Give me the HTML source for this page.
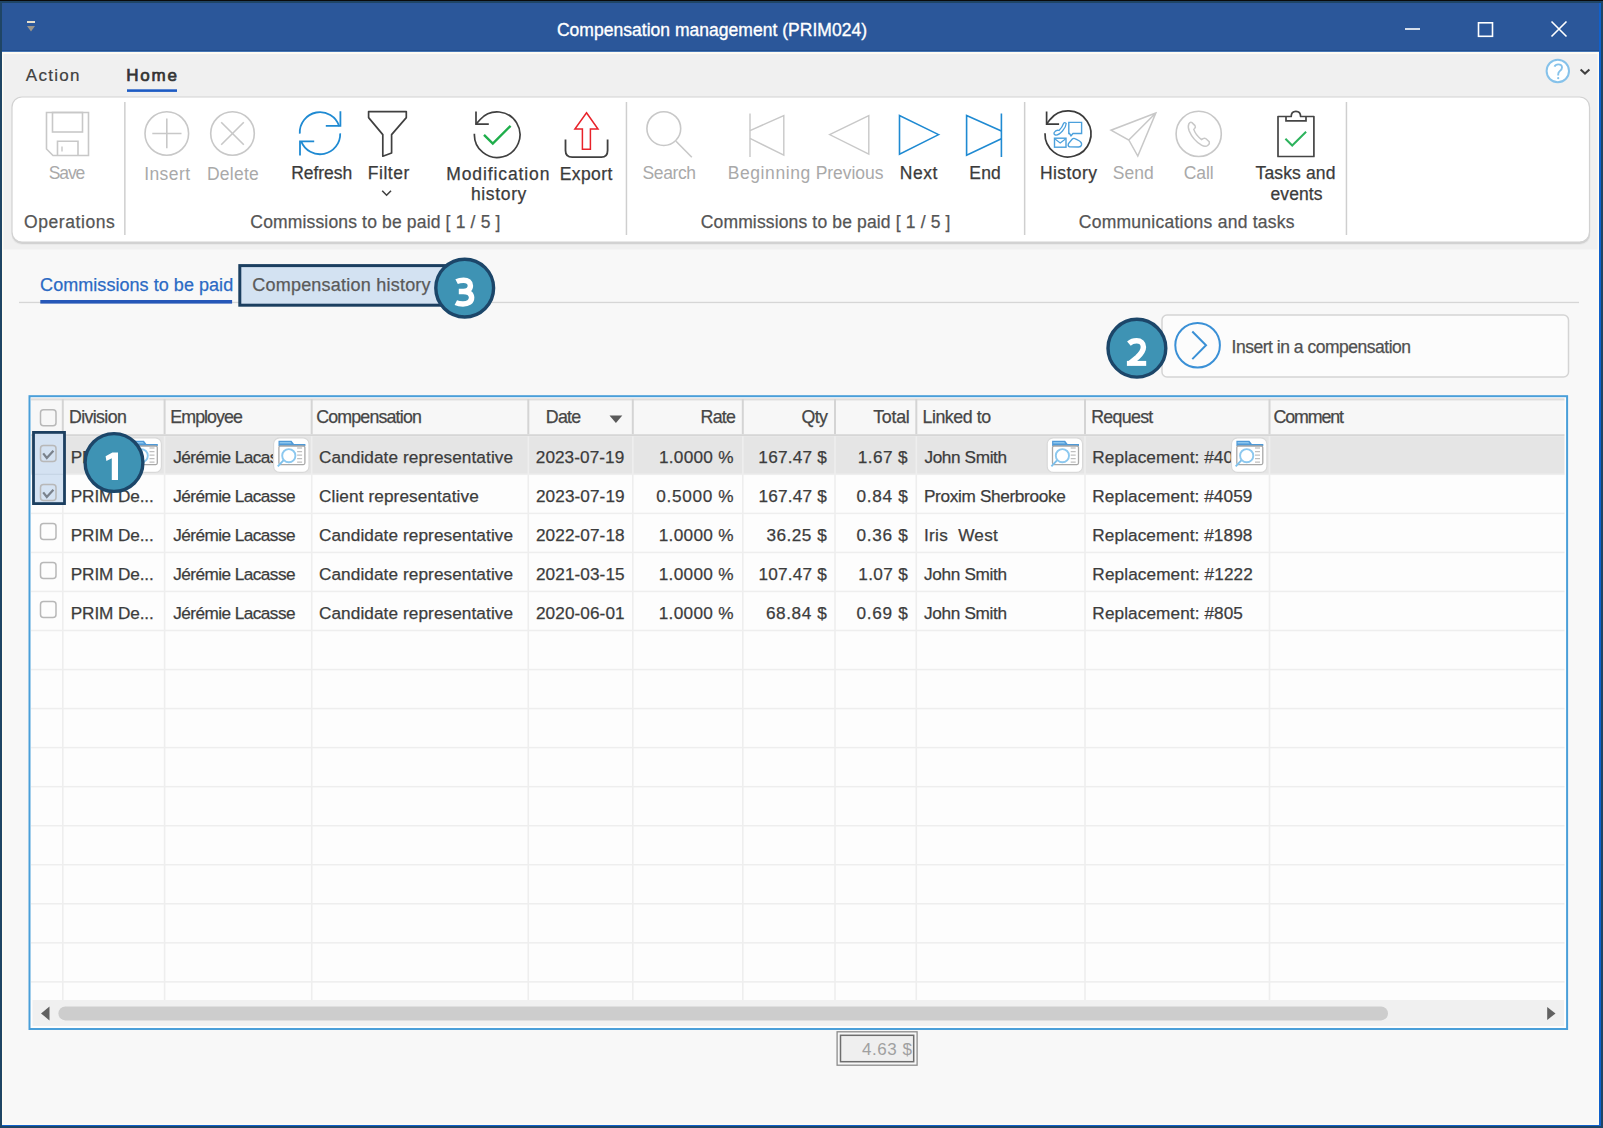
<!DOCTYPE html>
<html><head><meta charset="utf-8"><title>Compensation management</title>
<style>
html,body{margin:0;padding:0;background:#f8f8f8;}
body{width:1603px;height:1128px;overflow:hidden;}
svg{display:block;}
text{font-family:"Liberation Sans",sans-serif;}
</style></head><body>
<svg width="1603" height="1128" viewBox="0 0 1603 1128">
<rect x="0" y="0" width="1603" height="1128" fill="#1f4565"/>
<rect x="0" y="0" width="1603" height="1" fill="#0b0b0b"/>
<rect x="2" y="3" width="1599" height="1123" fill="#1060cc"/>
<rect x="2" y="3" width="1597" height="48" fill="#2b579a"/>
<rect x="2" y="50" width="1597" height="1.6" fill="#214e8e"/>
<rect x="2" y="51.8" width="1597" height="1073.2" fill="#fffcf3"/>
<rect x="3.5" y="54" width="1594" height="1069.5" fill="#f8f8f8"/>
<rect x="3.5" y="54" width="1594" height="195.5" fill="#f0f0f0"/>
<rect x="27" y="21" width="8" height="2" fill="#e8e0cc"/>
<path d="M27 26 L35 26 L31 31.5 Z" fill="#9a958a"/>
<text x="556.95" y="35.70" font-size="17.5" fill="#ffffff" font-weight="400" textLength="310.10" lengthAdjust="spacing" stroke="#ffffff" stroke-width="0.35">Compensation management (PRIM024)</text>
<rect x="1405" y="28.2" width="15" height="1.6" fill="#ffffff"/>
<rect x="1478.5" y="22.8" width="14" height="13.5" fill="none" stroke="#ffffff" stroke-width="1.6"/>
<path d="M1551.5 21.5 L1566.5 36.5 M1566.5 21.5 L1551.5 36.5" stroke="#ffffff" stroke-width="1.6"/>
<text x="25.78" y="81.00" font-size="17" fill="#404040" font-weight="400" textLength="53.64" lengthAdjust="spacing" stroke="#404040" stroke-width="0.2">Action</text>
<text x="126.28" y="81.00" font-size="17" fill="#333333" font-weight="400" textLength="50.74" lengthAdjust="spacing" stroke="#333333" stroke-width="0.7">Home</text>
<rect x="127" y="89.3" width="50" height="2.6" fill="#1d5bc4"/>
<circle cx="1557.8" cy="71" r="11.2" fill="#ffffff" stroke="#86c2ea" stroke-width="2"/>
<path d="M1554.5 66.6 Q1555.5 64.4 1558.2 64.4 Q1562 64.4 1562 67.6 Q1562 69.8 1559.6 71.2 Q1558.2 72.2 1558.2 74.4 L1558.2 75.4" fill="none" stroke="#86c2ea" stroke-width="1.9"/>
<circle cx="1558.2" cy="78.2" r="1.1" fill="#86c2ea"/>
<path d="M1580.6 69.6 L1585 73.6 L1589.4 69.6" fill="none" stroke="#404040" stroke-width="2"/>
<rect x="11.5" y="98" width="1579" height="147" rx="10" fill="#e9e9e9"/>
<rect x="12" y="98.5" width="1578" height="145.5" rx="10" fill="#d2d2d2"/>
<rect x="12" y="97" width="1577.5" height="145" rx="10" fill="#ffffff" stroke="#d2d2d2" stroke-width="1.2"/>
<rect x="124.1" y="102" width="1.5" height="133" fill="#cfcfcf"/>
<rect x="625.7" y="102" width="1.5" height="133" fill="#cfcfcf"/>
<rect x="1023.9" y="102" width="1.5" height="133" fill="#cfcfcf"/>
<rect x="1345.7" y="102" width="1.5" height="133" fill="#cfcfcf"/>
<path d="M46.5 112.5 H88.5 V155.5 H53 L46.5 149 Z" fill="none" stroke="#c8c8c8" stroke-width="1.6"/>
<rect x="52.5" y="112.5" width="30" height="19.5" fill="none" stroke="#c8c8c8" stroke-width="1.6"/>
<path d="M57.5 155.5 V141.2 H78 V155.5" fill="none" stroke="#c8c8c8" stroke-width="1.6"/>
<path d="M62 146.5 V151.5" stroke="#c8c8c8" stroke-width="1.4"/>
<text x="48.75" y="179.40" font-size="17.5" fill="#a9a9a9" font-weight="400" textLength="36.60" lengthAdjust="spacing" >Save</text>
<circle cx="166.8" cy="133.5" r="21.8" fill="none" stroke="#c8c8c8" stroke-width="1.6"/>
<path d="M152.3 133.5 H181.5 M166.8 118.6 V148.3" stroke="#c8c8c8" stroke-width="1.6"/>
<text x="144.15" y="179.60" font-size="17.5" fill="#a9a9a9" font-weight="400" textLength="45.90" lengthAdjust="spacing" >Insert</text>
<circle cx="232.5" cy="133.5" r="21.8" fill="none" stroke="#c8c8c8" stroke-width="1.6"/>
<path d="M221.2 122.2 L243.8 144.8 M243.8 122.2 L221.2 144.8" stroke="#c8c8c8" stroke-width="1.6"/>
<text x="206.95" y="179.60" font-size="17.5" fill="#a9a9a9" font-weight="400" textLength="51.90" lengthAdjust="spacing" >Delete</text>
<path d="M299.8 133.6 A20.2 20.2 0 0 1 339.2 126.2" fill="none" stroke="#1f8ad2" stroke-width="1.8"/>
<path d="M340.4 111.2 V125.8 H325.8" fill="none" stroke="#1f8ad2" stroke-width="1.8"/>
<path d="M340.2 133.4 A20.2 20.2 0 0 1 301.2 141.4" fill="none" stroke="#1f8ad2" stroke-width="1.8"/>
<path d="M300 155.6 V141.4 H314.2" fill="none" stroke="#1f8ad2" stroke-width="1.8"/>
<text x="291.15" y="179.40" font-size="17.5" fill="#3b3b3b" font-weight="400" textLength="61.00" lengthAdjust="spacing"  stroke="#3b3b3b" stroke-width="0.25">Refresh</text>
<path d="M368.6 111.6 H406.3 V117.6 L391.6 134.6 V153 L382.8 156.2 V134.6 L368.6 117.6 Z" fill="none" stroke="#404040" stroke-width="1.7" stroke-linejoin="round"/>
<path d="M382.2 190.8 L386.6 195.2 L391 190.8" fill="none" stroke="#404040" stroke-width="1.6"/>
<text x="367.85" y="179.40" font-size="17.5" fill="#3b3b3b" font-weight="400" textLength="41.40" lengthAdjust="spacing"  stroke="#3b3b3b" stroke-width="0.25">Filter</text>
<path d="M474.4 133.8 A22.8 22.8 0 1 0 480.2 119.5 L476 124.1" fill="none" stroke="#404040" stroke-width="1.7"/>
<path d="M476 111.4 V124.1 H488.8" fill="none" stroke="#404040" stroke-width="1.7"/>
<path d="M484 134.8 L492.8 143.6 L510.6 125.8" fill="none" stroke="#1fae4b" stroke-width="2.4"/>
<text x="446.25" y="179.60" font-size="17.5" fill="#3b3b3b" font-weight="400" textLength="103.20" lengthAdjust="spacing"  stroke="#3b3b3b" stroke-width="0.25">Modification</text>
<text x="470.95" y="199.80" font-size="17.5" fill="#3b3b3b" font-weight="400" textLength="55.40" lengthAdjust="spacing"  stroke="#3b3b3b" stroke-width="0.25">history</text>
<path d="M586.5 112.8 L598 129 H590.4 V149.2 H582.4 V129 H574.9 Z" fill="none" stroke="#e8222a" stroke-width="1.5" stroke-linejoin="miter"/>
<path d="M565.5 139.4 V150.5 Q565.5 157.2 572.2 157.2 H601.4 Q607.6 157.2 607.6 150.5 V139.4" fill="none" stroke="#404040" stroke-width="1.8"/>
<text x="559.65" y="179.60" font-size="17.5" fill="#3b3b3b" font-weight="400" textLength="52.60" lengthAdjust="spacing"  stroke="#3b3b3b" stroke-width="0.25">Export</text>
<circle cx="663.8" cy="128.6" r="16.9" fill="none" stroke="#c8c8c8" stroke-width="1.6"/>
<path d="M676 141.2 L691.8 157.2" stroke="#c8c8c8" stroke-width="1.6"/>
<text x="642.55" y="179.40" font-size="17.5" fill="#a9a9a9" font-weight="400" textLength="53.50" lengthAdjust="spacing" >Search</text>
<path d="M750 113.5 V157" stroke="#c8c8c8" stroke-width="1.4"/>
<path d="M750 130.6 L783.8 115.6 V155.2 L750 138.4" fill="none" stroke="#c8c8c8" stroke-width="1.4"/>
<text x="727.65" y="179.40" font-size="17.5" fill="#a9a9a9" font-weight="400" textLength="82.70" lengthAdjust="spacing" >Beginning</text>
<path d="M829.6 134.6 L868.8 115.6 V154.2 Z" fill="none" stroke="#c8c8c8" stroke-width="1.4" stroke-linejoin="miter"/>
<text x="815.65" y="179.40" font-size="17.5" fill="#a9a9a9" font-weight="400" textLength="67.80" lengthAdjust="spacing" >Previous</text>
<path d="M938.6 134.6 L899.5 115.6 V154.2 Z" fill="none" stroke="#1f8ad2" stroke-width="1.6"/>
<text x="899.75" y="179.40" font-size="17.5" fill="#3b3b3b" font-weight="400" textLength="37.50" lengthAdjust="spacing"  stroke="#3b3b3b" stroke-width="0.25">Next</text>
<path d="M1001.4 131 L966.6 115.6 V155.2 L1001.4 138.7" fill="none" stroke="#1f8ad2" stroke-width="1.6"/>
<path d="M1001.4 113.5 V157" stroke="#1f8ad2" stroke-width="1.6"/>
<text x="969.35" y="179.40" font-size="17.5" fill="#3b3b3b" font-weight="400" textLength="31.50" lengthAdjust="spacing"  stroke="#3b3b3b" stroke-width="0.25">End</text>
<path d="M1045 133.2 A23 23 0 1 0 1050 119.6 L1046.6 124.1" fill="none" stroke="#3c3c3c" stroke-width="1.7"/>
<path d="M1046.6 111.4 V124.1 H1059.1" fill="none" stroke="#3c3c3c" stroke-width="1.7"/>
<path d="M1054.2 132.5 Q1056 129.5 1059 130.5 Q1062.5 127 1063.5 123.5 Q1064.5 121.8 1066.2 123.5 Q1066 127 1062.5 131 Q1058.5 135.5 1055.5 135 Q1053.5 134.5 1054.2 132.5 Z" fill="none" stroke="#4ba0dc" stroke-width="1.3"/>
<path d="M1068.8 122.4 H1081.6 V133.5 H1073 L1071 135.8 L1069.5 133.5 H1068.8 Z" fill="none" stroke="#4ba0dc" stroke-width="1.4"/>
<rect x="1054.5" y="138.2" width="11.5" height="9" fill="none" stroke="#4ba0dc" stroke-width="1.4"/>
<path d="M1055 139 L1060.2 143 L1065.5 139" fill="none" stroke="#4ba0dc" stroke-width="1.2"/>
<path d="M1069.5 146.8 Q1067.5 146.5 1068.5 143.5 L1072.5 138.8 Q1074 137.8 1076 139.2 L1079.5 141 Q1082 142.5 1081.5 145 Q1081 147 1078.5 147 Z" fill="none" stroke="#4ba0dc" stroke-width="1.4"/>
<text x="1039.95" y="179.40" font-size="17.5" fill="#3b3b3b" font-weight="400" textLength="57.00" lengthAdjust="spacing"  stroke="#3b3b3b" stroke-width="0.25">History</text>
<path d="M1155.8 113 L1111 130.2 L1128.8 140 L1137.8 156 Z M1128.8 140 L1155.8 113" fill="none" stroke="#c8c8c8" stroke-width="1.5" stroke-linejoin="miter"/>
<text x="1112.75" y="179.40" font-size="17.5" fill="#a9a9a9" font-weight="400" textLength="41.10" lengthAdjust="spacing" >Send</text>
<circle cx="1198.7" cy="133.9" r="22.6" fill="none" stroke="#c8c8c8" stroke-width="1.6"/>
<path d="M1188.8 124 Q1190.2 121.6 1192 122.6 L1195 125.6 Q1196 127 1194.6 128.6 L1193.8 129.4 Q1195.5 135 1201.6 139.6 L1203 138.6 Q1204.6 137.6 1206 138.8 L1209.2 141.6 Q1210 143.6 1208 145.2 Q1205.5 147.4 1201.5 145.2 Q1193 140 1189.2 131 Q1187.6 126.6 1188.8 124 Z" fill="none" stroke="#c8c8c8" stroke-width="1.5"/>
<text x="1183.65" y="179.40" font-size="17.5" fill="#a9a9a9" font-weight="400" textLength="30.10" lengthAdjust="spacing" >Call</text>
<path d="M1278 116.5 H1291.2 Q1291.2 111.3 1295.9 111.3 Q1300.6 111.3 1300.6 116.5 H1313.9 V156.5 H1278 Z" fill="none" stroke="#454545" stroke-width="1.7" stroke-linejoin="round"/>
<path d="M1286 116.5 V120.9 H1306 V116.5" fill="none" stroke="#454545" stroke-width="1.7"/>
<path d="M1285.4 138.7 L1292.2 145.5 L1306.1 131.8" fill="none" stroke="#2db35d" stroke-width="2"/>
<text x="1255.55" y="179.40" font-size="17.5" fill="#3b3b3b" font-weight="400" textLength="79.90" lengthAdjust="spacing"  stroke="#3b3b3b" stroke-width="0.25">Tasks and</text>
<text x="1270.55" y="199.60" font-size="17.5" fill="#3b3b3b" font-weight="400" textLength="52.00" lengthAdjust="spacing"  stroke="#3b3b3b" stroke-width="0.25">events</text>
<text x="23.95" y="227.50" font-size="17.5" fill="#555555" font-weight="400" textLength="90.80" lengthAdjust="spacing"  stroke="#555555" stroke-width="0.25">Operations</text>
<text x="250.35" y="227.60" font-size="17.5" fill="#555555" font-weight="400" textLength="250.10" lengthAdjust="spacing"  stroke="#555555" stroke-width="0.25">Commissions to be paid [ 1 / 5 ]</text>
<text x="700.75" y="227.50" font-size="17.5" fill="#555555" font-weight="400" textLength="249.70" lengthAdjust="spacing"  stroke="#555555" stroke-width="0.25">Commissions to be paid [ 1 / 5 ]</text>
<text x="1078.85" y="227.50" font-size="17.5" fill="#555555" font-weight="400" textLength="215.70" lengthAdjust="spacing"  stroke="#555555" stroke-width="0.25">Communications and tasks</text>
<rect x="19" y="301.8" width="1560" height="1.3" fill="#d6d6d6"/>
<text x="40.12" y="290.50" font-size="18" fill="#2b6ac4" font-weight="400" textLength="193.06" lengthAdjust="spacing"  stroke="#2b6ac4" stroke-width="0.25">Commissions to be paid</text>
<rect x="40.3" y="300" width="191.8" height="3.6" fill="#2657b8"/>
<rect x="239.8" y="265.6" width="205.5" height="39.6" fill="#d3e2f2" stroke="#1c3f60" stroke-width="3"/>
<text x="252.22" y="290.50" font-size="18" fill="#5a5a5a" font-weight="400" textLength="178.36" lengthAdjust="spacing"  stroke="#5a5a5a" stroke-width="0.25">Compensation history</text>
<rect x="1162" y="315" width="406.5" height="62" rx="5" fill="#fcfcfc" stroke="#d4d4d4" stroke-width="1.5"/>
<circle cx="1197.6" cy="345.3" r="22.3" fill="none" stroke="#3a90d6" stroke-width="2"/>
<path d="M1192.3 331.5 L1206 345.3 L1192.3 359.1" fill="none" stroke="#3a90d6" stroke-width="2"/>
<text x="1231.55" y="353.40" font-size="17.5" fill="#505050" font-weight="400" textLength="179.50" lengthAdjust="spacing"  stroke="#505050" stroke-width="0.25">Insert in a compensation</text>
<rect x="29.5" y="396.2" width="1537.6" height="632.8" fill="#fdfdfd" stroke="#4a9fd9" stroke-width="2"/>
<rect x="31" y="399" width="1533.5" height="36" fill="#f7f7f7"/>
<rect x="31" y="398" width="1533.5" height="1" fill="#ece6e2"/>
<rect x="31" y="399" width="1533.5" height="1.4" fill="#dddddd"/>
<rect x="31" y="434.2" width="1533.5" height="2" fill="#d6d6d6"/>
<rect x="61.8" y="399" width="2" height="35.2" fill="#d4d4d4"/>
<rect x="163.6" y="399" width="2" height="35.2" fill="#d4d4d4"/>
<rect x="310.7" y="399" width="2" height="35.2" fill="#d4d4d4"/>
<rect x="527.3" y="399" width="2" height="35.2" fill="#d4d4d4"/>
<rect x="631.8" y="399" width="2" height="35.2" fill="#d4d4d4"/>
<rect x="741.8" y="399" width="2" height="35.2" fill="#d4d4d4"/>
<rect x="834.0" y="399" width="2" height="35.2" fill="#d4d4d4"/>
<rect x="915.3" y="399" width="2" height="35.2" fill="#d4d4d4"/>
<rect x="1084.0" y="399" width="2" height="35.2" fill="#d4d4d4"/>
<rect x="1268.5" y="399" width="2" height="35.2" fill="#d4d4d4"/>
<rect x="31" y="436.2" width="1533.5" height="38" fill="#e5e5e5"/>
<rect x="31" y="473.59" width="1533.5" height="1.5" fill="#eeeeee"/>
<rect x="31" y="512.63" width="1533.5" height="1.5" fill="#eeeeee"/>
<rect x="31" y="551.67" width="1533.5" height="1.5" fill="#eeeeee"/>
<rect x="31" y="590.71" width="1533.5" height="1.5" fill="#eeeeee"/>
<rect x="31" y="629.75" width="1533.5" height="1.5" fill="#eeeeee"/>
<rect x="31" y="668.79" width="1533.5" height="1.5" fill="#eeeeee"/>
<rect x="31" y="707.83" width="1533.5" height="1.5" fill="#eeeeee"/>
<rect x="31" y="746.87" width="1533.5" height="1.5" fill="#eeeeee"/>
<rect x="31" y="785.91" width="1533.5" height="1.5" fill="#eeeeee"/>
<rect x="31" y="824.95" width="1533.5" height="1.5" fill="#eeeeee"/>
<rect x="31" y="863.99" width="1533.5" height="1.5" fill="#eeeeee"/>
<rect x="31" y="903.03" width="1533.5" height="1.5" fill="#eeeeee"/>
<rect x="31" y="942.07" width="1533.5" height="1.5" fill="#eeeeee"/>
<rect x="31" y="981.11" width="1533.5" height="1.5" fill="#eeeeee"/>
<rect x="62.0" y="436.2" width="1.6" height="563.8" fill="#eeeeee"/>
<rect x="163.8" y="436.2" width="1.6" height="563.8" fill="#eeeeee"/>
<rect x="310.9" y="436.2" width="1.6" height="563.8" fill="#eeeeee"/>
<rect x="527.5" y="436.2" width="1.6" height="563.8" fill="#eeeeee"/>
<rect x="632.0" y="436.2" width="1.6" height="563.8" fill="#eeeeee"/>
<rect x="742.0" y="436.2" width="1.6" height="563.8" fill="#eeeeee"/>
<rect x="834.2" y="436.2" width="1.6" height="563.8" fill="#eeeeee"/>
<rect x="915.5" y="436.2" width="1.6" height="563.8" fill="#eeeeee"/>
<rect x="1084.2" y="436.2" width="1.6" height="563.8" fill="#eeeeee"/>
<rect x="1268.7" y="436.2" width="1.6" height="563.8" fill="#eeeeee"/>
<rect x="32.5" y="1000" width="1531.5" height="26" fill="#f0f0f0"/>
<path d="M49.5 1006.4 V1020.4 L41 1013.4 Z" fill="#616161"/>
<path d="M1547.2 1007 V1020 L1555.5 1013.5 Z" fill="#616161"/>
<rect x="58.4" y="1006.4" width="1329.6" height="14" rx="7" fill="#cdcdcd"/>
<text x="68.93" y="423.20" font-size="17.8" fill="#464646" font-weight="400" textLength="57.94" lengthAdjust="spacing"  stroke="#464646" stroke-width="0.25">Division</text>
<text x="170.33" y="423.30" font-size="17.8" fill="#464646" font-weight="400" textLength="72.54" lengthAdjust="spacing"  stroke="#464646" stroke-width="0.25">Employee</text>
<text x="316.13" y="423.30" font-size="17.8" fill="#464646" font-weight="400" textLength="105.74" lengthAdjust="spacing"  stroke="#464646" stroke-width="0.25">Compensation</text>
<text x="545.83" y="423.30" font-size="17.8" fill="#464646" font-weight="400" textLength="35.34" lengthAdjust="spacing"  stroke="#464646" stroke-width="0.25">Date</text>
<path d="M609.5 415.5 H622.3 L615.9 423.1 Z" fill="#5a5a5a"/>
<text x="700.53" y="423.30" font-size="17.8" fill="#464646" font-weight="400" textLength="35.34" lengthAdjust="spacing"  stroke="#464646" stroke-width="0.25">Rate</text>
<text x="801.53" y="423.30" font-size="17.8" fill="#464646" font-weight="400" textLength="26.44" lengthAdjust="spacing"  stroke="#464646" stroke-width="0.25">Qty</text>
<text x="873.13" y="423.30" font-size="17.8" fill="#464646" font-weight="400" textLength="36.64" lengthAdjust="spacing"  stroke="#464646" stroke-width="0.25">Total</text>
<text x="922.43" y="423.30" font-size="17.8" fill="#464646" font-weight="400" textLength="68.64" lengthAdjust="spacing"  stroke="#464646" stroke-width="0.25">Linked to</text>
<text x="1091.23" y="423.30" font-size="17.8" fill="#464646" font-weight="400" textLength="62.04" lengthAdjust="spacing"  stroke="#464646" stroke-width="0.25">Request</text>
<text x="1273.53" y="423.30" font-size="17.8" fill="#464646" font-weight="400" textLength="70.54" lengthAdjust="spacing"  stroke="#464646" stroke-width="0.25">Comment</text>
<rect x="40.5" y="409.8" width="15.5" height="16" rx="3" fill="none" stroke="#b8b8b8" stroke-width="1.5"/>
<text x="70.77" y="462.60" font-size="17.2" fill="#3c3c3c" font-weight="400" textLength="82.96" lengthAdjust="spacing" xml:space="preserve" stroke="#3c3c3c" stroke-width="0.25">PRIM De...</text>
<text x="173.17" y="462.60" font-size="17.2" fill="#3c3c3c" font-weight="400" textLength="122.36" lengthAdjust="spacing" xml:space="preserve" stroke="#3c3c3c" stroke-width="0.25">Jérémie Lacasse</text>
<text x="318.97" y="462.60" font-size="17.2" fill="#3c3c3c" font-weight="400" textLength="194.06" lengthAdjust="spacing" xml:space="preserve" stroke="#3c3c3c" stroke-width="0.25">Candidate representative</text>
<text x="535.77" y="462.60" font-size="17.2" fill="#3c3c3c" font-weight="400" textLength="88.46" lengthAdjust="spacing" xml:space="preserve" stroke="#3c3c3c" stroke-width="0.25">2023-07-19</text>
<text x="658.97" y="462.60" font-size="17.2" fill="#3c3c3c" font-weight="400" textLength="74.56" lengthAdjust="spacing" xml:space="preserve" stroke="#3c3c3c" stroke-width="0.25">1.0000 %</text>
<text x="758.37" y="462.60" font-size="17.2" fill="#3c3c3c" font-weight="400" textLength="68.36" lengthAdjust="spacing" xml:space="preserve" stroke="#3c3c3c" stroke-width="0.25">167.47 $</text>
<text x="857.87" y="462.60" font-size="17.2" fill="#3c3c3c" font-weight="400" textLength="49.76" lengthAdjust="spacing" xml:space="preserve" stroke="#3c3c3c" stroke-width="0.25">1.67 $</text>
<text x="924.47" y="462.60" font-size="17.2" fill="#3c3c3c" font-weight="400" textLength="82.56" lengthAdjust="spacing" xml:space="preserve" stroke="#3c3c3c" stroke-width="0.25">John Smith</text>
<text x="1092.37" y="462.60" font-size="17.2" fill="#3c3c3c" font-weight="400" textLength="159.96" lengthAdjust="spacing" xml:space="preserve" stroke="#3c3c3c" stroke-width="0.25">Replacement: #4059</text>
<rect x="40.5" y="445.4" width="15.5" height="16" rx="3" fill="none" stroke="#b8b8b8" stroke-width="1.5"/>
<path d="M43.2 453.4 L46.8 458.0 L53.4 450.8" fill="none" stroke="#7a828c" stroke-width="2.2"/>
<text x="70.77" y="501.60" font-size="17.2" fill="#3c3c3c" font-weight="400" textLength="82.96" lengthAdjust="spacing" xml:space="preserve" stroke="#3c3c3c" stroke-width="0.25">PRIM De...</text>
<text x="173.17" y="501.60" font-size="17.2" fill="#3c3c3c" font-weight="400" textLength="122.36" lengthAdjust="spacing" xml:space="preserve" stroke="#3c3c3c" stroke-width="0.25">Jérémie Lacasse</text>
<text x="318.97" y="501.60" font-size="17.2" fill="#3c3c3c" font-weight="400" textLength="159.76" lengthAdjust="spacing" xml:space="preserve" stroke="#3c3c3c" stroke-width="0.25">Client representative</text>
<text x="535.97" y="501.60" font-size="17.2" fill="#3c3c3c" font-weight="400" textLength="88.66" lengthAdjust="spacing" xml:space="preserve" stroke="#3c3c3c" stroke-width="0.25">2023-07-19</text>
<text x="656.27" y="501.60" font-size="17.2" fill="#3c3c3c" font-weight="400" textLength="77.36" lengthAdjust="spacing" xml:space="preserve" stroke="#3c3c3c" stroke-width="0.25">0.5000 %</text>
<text x="758.57" y="501.60" font-size="17.2" fill="#3c3c3c" font-weight="400" textLength="68.16" lengthAdjust="spacing" xml:space="preserve" stroke="#3c3c3c" stroke-width="0.25">167.47 $</text>
<text x="856.57" y="501.60" font-size="17.2" fill="#3c3c3c" font-weight="400" textLength="51.26" lengthAdjust="spacing" xml:space="preserve" stroke="#3c3c3c" stroke-width="0.25">0.84 $</text>
<text x="923.97" y="501.60" font-size="17.2" fill="#3c3c3c" font-weight="400" textLength="141.76" lengthAdjust="spacing" xml:space="preserve" stroke="#3c3c3c" stroke-width="0.25">Proxim Sherbrooke</text>
<text x="1092.37" y="501.60" font-size="17.2" fill="#3c3c3c" font-weight="400" textLength="159.96" lengthAdjust="spacing" xml:space="preserve" stroke="#3c3c3c" stroke-width="0.25">Replacement: #4059</text>
<rect x="40.5" y="484.4" width="15.5" height="16" rx="3" fill="none" stroke="#b8b8b8" stroke-width="1.5"/>
<path d="M43.2 492.4 L46.8 497.0 L53.4 489.8" fill="none" stroke="#7a828c" stroke-width="2.2"/>
<text x="70.77" y="540.60" font-size="17.2" fill="#3c3c3c" font-weight="400" textLength="82.96" lengthAdjust="spacing" xml:space="preserve" stroke="#3c3c3c" stroke-width="0.25">PRIM De...</text>
<text x="173.17" y="540.60" font-size="17.2" fill="#3c3c3c" font-weight="400" textLength="122.36" lengthAdjust="spacing" xml:space="preserve" stroke="#3c3c3c" stroke-width="0.25">Jérémie Lacasse</text>
<text x="318.97" y="540.60" font-size="17.2" fill="#3c3c3c" font-weight="400" textLength="194.06" lengthAdjust="spacing" xml:space="preserve" stroke="#3c3c3c" stroke-width="0.25">Candidate representative</text>
<text x="535.97" y="540.60" font-size="17.2" fill="#3c3c3c" font-weight="400" textLength="88.66" lengthAdjust="spacing" xml:space="preserve" stroke="#3c3c3c" stroke-width="0.25">2022-07-18</text>
<text x="658.67" y="540.60" font-size="17.2" fill="#3c3c3c" font-weight="400" textLength="74.96" lengthAdjust="spacing" xml:space="preserve" stroke="#3c3c3c" stroke-width="0.25">1.0000 %</text>
<text x="766.47" y="540.60" font-size="17.2" fill="#3c3c3c" font-weight="400" textLength="60.26" lengthAdjust="spacing" xml:space="preserve" stroke="#3c3c3c" stroke-width="0.25">36.25 $</text>
<text x="856.57" y="540.60" font-size="17.2" fill="#3c3c3c" font-weight="400" textLength="51.26" lengthAdjust="spacing" xml:space="preserve" stroke="#3c3c3c" stroke-width="0.25">0.36 $</text>
<text x="923.97" y="540.60" font-size="17.2" fill="#3c3c3c" font-weight="400" textLength="73.86" lengthAdjust="spacing" xml:space="preserve" stroke="#3c3c3c" stroke-width="0.25">Iris  West</text>
<text x="1092.37" y="540.60" font-size="17.2" fill="#3c3c3c" font-weight="400" textLength="159.96" lengthAdjust="spacing" xml:space="preserve" stroke="#3c3c3c" stroke-width="0.25">Replacement: #1898</text>
<rect x="40.5" y="523.4" width="15.5" height="16" rx="3" fill="none" stroke="#b8b8b8" stroke-width="1.5"/>
<text x="70.77" y="579.60" font-size="17.2" fill="#3c3c3c" font-weight="400" textLength="82.96" lengthAdjust="spacing" xml:space="preserve" stroke="#3c3c3c" stroke-width="0.25">PRIM De...</text>
<text x="173.17" y="579.60" font-size="17.2" fill="#3c3c3c" font-weight="400" textLength="122.36" lengthAdjust="spacing" xml:space="preserve" stroke="#3c3c3c" stroke-width="0.25">Jérémie Lacasse</text>
<text x="318.97" y="579.60" font-size="17.2" fill="#3c3c3c" font-weight="400" textLength="194.06" lengthAdjust="spacing" xml:space="preserve" stroke="#3c3c3c" stroke-width="0.25">Candidate representative</text>
<text x="535.97" y="579.60" font-size="17.2" fill="#3c3c3c" font-weight="400" textLength="88.66" lengthAdjust="spacing" xml:space="preserve" stroke="#3c3c3c" stroke-width="0.25">2021-03-15</text>
<text x="658.67" y="579.60" font-size="17.2" fill="#3c3c3c" font-weight="400" textLength="74.96" lengthAdjust="spacing" xml:space="preserve" stroke="#3c3c3c" stroke-width="0.25">1.0000 %</text>
<text x="758.57" y="579.60" font-size="17.2" fill="#3c3c3c" font-weight="400" textLength="68.16" lengthAdjust="spacing" xml:space="preserve" stroke="#3c3c3c" stroke-width="0.25">107.47 $</text>
<text x="858.37" y="579.60" font-size="17.2" fill="#3c3c3c" font-weight="400" textLength="49.46" lengthAdjust="spacing" xml:space="preserve" stroke="#3c3c3c" stroke-width="0.25">1.07 $</text>
<text x="923.97" y="579.60" font-size="17.2" fill="#3c3c3c" font-weight="400" textLength="83.06" lengthAdjust="spacing" xml:space="preserve" stroke="#3c3c3c" stroke-width="0.25">John Smith</text>
<text x="1092.37" y="579.60" font-size="17.2" fill="#3c3c3c" font-weight="400" textLength="160.46" lengthAdjust="spacing" xml:space="preserve" stroke="#3c3c3c" stroke-width="0.25">Replacement: #1222</text>
<rect x="40.5" y="562.4" width="15.5" height="16" rx="3" fill="none" stroke="#b8b8b8" stroke-width="1.5"/>
<text x="70.77" y="618.60" font-size="17.2" fill="#3c3c3c" font-weight="400" textLength="82.96" lengthAdjust="spacing" xml:space="preserve" stroke="#3c3c3c" stroke-width="0.25">PRIM De...</text>
<text x="173.17" y="618.60" font-size="17.2" fill="#3c3c3c" font-weight="400" textLength="122.36" lengthAdjust="spacing" xml:space="preserve" stroke="#3c3c3c" stroke-width="0.25">Jérémie Lacasse</text>
<text x="318.97" y="618.60" font-size="17.2" fill="#3c3c3c" font-weight="400" textLength="194.06" lengthAdjust="spacing" xml:space="preserve" stroke="#3c3c3c" stroke-width="0.25">Candidate representative</text>
<text x="535.97" y="618.60" font-size="17.2" fill="#3c3c3c" font-weight="400" textLength="88.66" lengthAdjust="spacing" xml:space="preserve" stroke="#3c3c3c" stroke-width="0.25">2020-06-01</text>
<text x="658.67" y="618.60" font-size="17.2" fill="#3c3c3c" font-weight="400" textLength="74.96" lengthAdjust="spacing" xml:space="preserve" stroke="#3c3c3c" stroke-width="0.25">1.0000 %</text>
<text x="765.97" y="618.60" font-size="17.2" fill="#3c3c3c" font-weight="400" textLength="60.76" lengthAdjust="spacing" xml:space="preserve" stroke="#3c3c3c" stroke-width="0.25">68.84 $</text>
<text x="856.57" y="618.60" font-size="17.2" fill="#3c3c3c" font-weight="400" textLength="51.26" lengthAdjust="spacing" xml:space="preserve" stroke="#3c3c3c" stroke-width="0.25">0.69 $</text>
<text x="923.97" y="618.60" font-size="17.2" fill="#3c3c3c" font-weight="400" textLength="83.06" lengthAdjust="spacing" xml:space="preserve" stroke="#3c3c3c" stroke-width="0.25">John Smith</text>
<text x="1092.37" y="618.60" font-size="17.2" fill="#3c3c3c" font-weight="400" textLength="150.56" lengthAdjust="spacing" xml:space="preserve" stroke="#3c3c3c" stroke-width="0.25">Replacement: #805</text>
<rect x="40.5" y="601.4" width="15.5" height="16" rx="3" fill="none" stroke="#b8b8b8" stroke-width="1.5"/>
<rect x="126.0" y="437.8" width="35.4" height="34.6" rx="6" fill="#ffffff" stroke="#d9d9d9" stroke-width="1.2"/>
<path d="M130.9 446 V440.8 H143.9 L146.4 444 H157.8 V446 Z" fill="#4f9ad8"/>
<path d="M132.1 443.6 V442 H142.9 L144.1 443.6 Z" fill="#8cc6ee"/>
<rect x="131.3" y="446" width="26" height="18.6" rx="1.5" fill="#ffffff" stroke="#a8a8a8" stroke-width="1.3"/>
<rect x="149.5" y="447.5" width="5" height="1" fill="#b0b0b0"/>
<rect x="149.5" y="451.2" width="5" height="1" fill="#b0b0b0"/>
<rect x="149.5" y="454.6" width="5" height="1" fill="#b0b0b0"/>
<rect x="149.5" y="458.2" width="5" height="1" fill="#b0b0b0"/>
<rect x="149.5" y="461.6" width="5" height="1" fill="#b0b0b0"/>
<circle cx="141.2" cy="455.7" r="6.6" fill="#ffffff" fill-opacity="0.9" stroke="#8cc8ef" stroke-width="1.9"/>
<path d="M135.8 460.4 L130.2 466.4" stroke="#7cc0ec" stroke-width="1.9"/>
<rect x="273.6" y="437.8" width="35.4" height="34.6" rx="6" fill="#ffffff" stroke="#d9d9d9" stroke-width="1.2"/>
<path d="M278.5 446 V440.8 H291.5 L294.0 444 H305.4 V446 Z" fill="#4f9ad8"/>
<path d="M279.7 443.6 V442 H290.5 L291.7 443.6 Z" fill="#8cc6ee"/>
<rect x="278.9" y="446" width="26" height="18.6" rx="1.5" fill="#ffffff" stroke="#a8a8a8" stroke-width="1.3"/>
<rect x="297.1" y="447.5" width="5" height="1" fill="#b0b0b0"/>
<rect x="297.1" y="451.2" width="5" height="1" fill="#b0b0b0"/>
<rect x="297.1" y="454.6" width="5" height="1" fill="#b0b0b0"/>
<rect x="297.1" y="458.2" width="5" height="1" fill="#b0b0b0"/>
<rect x="297.1" y="461.6" width="5" height="1" fill="#b0b0b0"/>
<circle cx="288.8" cy="455.7" r="6.6" fill="#ffffff" fill-opacity="0.9" stroke="#8cc8ef" stroke-width="1.9"/>
<path d="M283.4 460.4 L277.8 466.4" stroke="#7cc0ec" stroke-width="1.9"/>
<rect x="1047.2" y="437.8" width="35.4" height="34.6" rx="6" fill="#ffffff" stroke="#d9d9d9" stroke-width="1.2"/>
<path d="M1052.1 446 V440.8 H1065.1 L1067.6 444 H1079.0 V446 Z" fill="#4f9ad8"/>
<path d="M1053.3 443.6 V442 H1064.1 L1065.3 443.6 Z" fill="#8cc6ee"/>
<rect x="1052.5" y="446" width="26" height="18.6" rx="1.5" fill="#ffffff" stroke="#a8a8a8" stroke-width="1.3"/>
<rect x="1070.7" y="447.5" width="5" height="1" fill="#b0b0b0"/>
<rect x="1070.7" y="451.2" width="5" height="1" fill="#b0b0b0"/>
<rect x="1070.7" y="454.6" width="5" height="1" fill="#b0b0b0"/>
<rect x="1070.7" y="458.2" width="5" height="1" fill="#b0b0b0"/>
<rect x="1070.7" y="461.6" width="5" height="1" fill="#b0b0b0"/>
<circle cx="1062.4" cy="455.7" r="6.6" fill="#ffffff" fill-opacity="0.9" stroke="#8cc8ef" stroke-width="1.9"/>
<path d="M1057.0 460.4 L1051.4 466.4" stroke="#7cc0ec" stroke-width="1.9"/>
<rect x="1231.5" y="437.8" width="35.4" height="34.6" rx="6" fill="#ffffff" stroke="#d9d9d9" stroke-width="1.2"/>
<path d="M1236.4 446 V440.8 H1249.4 L1251.9 444 H1263.3 V446 Z" fill="#4f9ad8"/>
<path d="M1237.6 443.6 V442 H1248.4 L1249.6 443.6 Z" fill="#8cc6ee"/>
<rect x="1236.8" y="446" width="26" height="18.6" rx="1.5" fill="#ffffff" stroke="#a8a8a8" stroke-width="1.3"/>
<rect x="1255.0" y="447.5" width="5" height="1" fill="#b0b0b0"/>
<rect x="1255.0" y="451.2" width="5" height="1" fill="#b0b0b0"/>
<rect x="1255.0" y="454.6" width="5" height="1" fill="#b0b0b0"/>
<rect x="1255.0" y="458.2" width="5" height="1" fill="#b0b0b0"/>
<rect x="1255.0" y="461.6" width="5" height="1" fill="#b0b0b0"/>
<circle cx="1246.7" cy="455.7" r="6.6" fill="#ffffff" fill-opacity="0.9" stroke="#8cc8ef" stroke-width="1.9"/>
<path d="M1241.3 460.4 L1235.7 466.4" stroke="#7cc0ec" stroke-width="1.9"/>
<rect x="33.5" y="432.4" width="31" height="71.2" fill="#d3e2f2" fill-opacity="0.95" stroke="#1c3f60" stroke-width="2.8"/>
<rect x="35" y="473.8" width="28" height="1" fill="#c4d3e3"/>
<rect x="40.5" y="445.4" width="15.5" height="16" rx="3" fill="none" stroke="#b8b8b8" stroke-width="1.5"/>
<path d="M43.2 453.4 L46.8 458.0 L53.4 450.8" fill="none" stroke="#7a828c" stroke-width="2.2"/>
<rect x="40.5" y="484.4" width="15.5" height="16" rx="3" fill="none" stroke="#b8b8b8" stroke-width="1.5"/>
<path d="M43.2 492.4 L46.8 497.0 L53.4 489.8" fill="none" stroke="#7a828c" stroke-width="2.2"/>
<circle cx="114" cy="462.5" r="28.9" fill="#3e93b4" stroke="#1c4669" stroke-width="3.4"/>
<path d="M112.4 452.6 H118 V479.9 H111.8 V458.3 L106.4 461 L105.6 456.3 Z" fill="#ffffff"/>
<circle cx="1136.9" cy="348.2" r="28.9" fill="#3e93b4" stroke="#1c4669" stroke-width="3.4"/>
<path d="M1128.9 343.6 C1131.2 341.6 1134 340.8 1136.6 340.8 C1140.8 340.8 1143.4 343.4 1143.4 347 C1143.4 350.6 1141.6 353.2 1137.6 357 L1130 363.4" fill="none" stroke="#ffffff" stroke-width="5.5"/>
<rect x="1126.9" y="360.9" width="19.3" height="5" fill="#ffffff"/>
<circle cx="464.7" cy="288.1" r="28.9" fill="#3e93b4" stroke="#1c4669" stroke-width="3.4"/>
<path d="M456.6 281.6 C458.6 280.6 461 280.2 463.6 280.2 C467.8 280.2 470.4 282.4 470.4 285.8 C470.4 289.2 467.6 291.4 463.2 291.4 H458.8 M463.2 291.4 C468.6 291.4 471.6 293.8 471.6 297.6 C471.6 301.8 468.4 304 463 304 C460.2 304 457.8 303.6 455.8 302.6" fill="none" stroke="#ffffff" stroke-width="5.5"/>
<rect x="837.1" y="1031.8" width="80" height="33.4" fill="#f8f8f8" stroke="#8c8c8c" stroke-width="1.3"/>
<rect x="840.5" y="1035.3" width="73.2" height="26.4" fill="#efefef" stroke="#6e6e6e" stroke-width="1.5"/>
<text x="861.98" y="1054.80" font-size="17" fill="#a0a0a0" font-weight="400" textLength="50.04" lengthAdjust="spacing" >4.63 $</text>
</svg>
</body></html>
